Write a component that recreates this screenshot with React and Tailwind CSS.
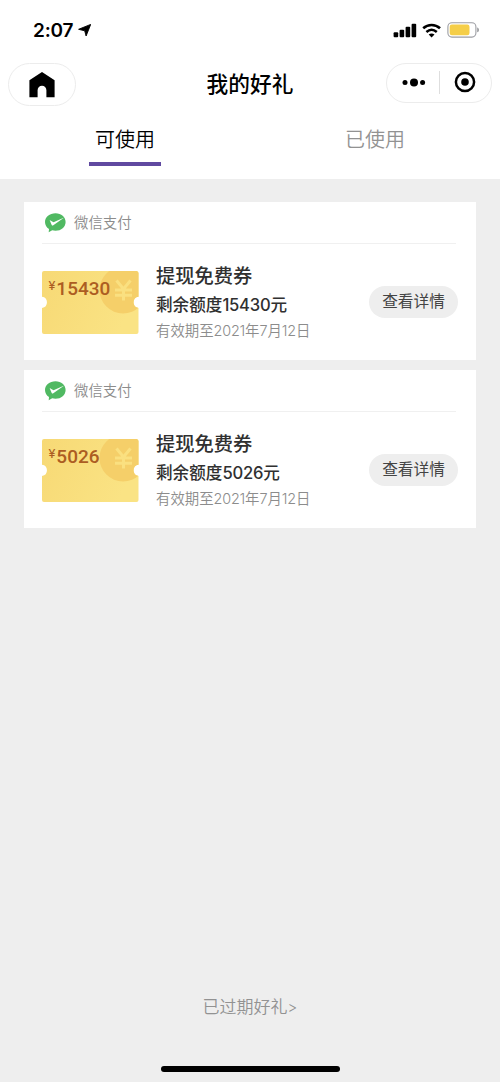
import React from "react";

const coupons = [
  { amount: "15430", name: "提现免费券", quota: "15430" },
  { amount: "5026", name: "提现免费券", quota: "5026" },
];

function StatusBar() {
  return (
    <div className="flex h-[60px] items-center justify-between pl-[33px] pr-[20px]">
      <div className="flex items-center gap-[5px]">
        <span className="font-['Inter',sans-serif] text-[19px] leading-none font-semibold tracking-[-0.2px]">2:07</span>
        <svg width="13" height="13" viewBox="0 0 13 13">
          <path d="M12.7 .4 8.1 12 6.7 6.8 .6 5.3Z" fill="#000" stroke="#000" strokeWidth=".9" strokeLinejoin="round" />
        </svg>
      </div>
      <div className="flex items-center">
        <svg width="24" height="15" viewBox="0 0 24 15">
          <rect x=".6" y="9.2" width="4.6" height="5" rx="1" />
          <rect x="6.6" y="6.7" width="4.6" height="7.5" rx="1" />
          <rect x="12.6" y="3.8" width="4.6" height="10.4" rx="1" />
          <rect x="18.6" y=".8" width="4.6" height="13.4" rx="1" />
        </svg>
        <svg className="ml-[5px]" width="20" height="15" viewBox="0 0 20 15">
          <path d="M1.2 5.2C6 .9 13.2.9 18 5.2" fill="none" stroke="#000" strokeWidth="2.6" />
          <path d="M4.4 9C7.6 6.2 11.6 6.2 14.8 9" fill="none" stroke="#000" strokeWidth="2.5" />
          <path d="M6.7 11.5C8.5 10 10.7 10 12.5 11.5L9.6 14.4Z" />
        </svg>
        <svg className="ml-[5px]" width="33" height="16" viewBox="0 0 33 16">
          <rect x=".9" y=".7" width="28" height="14.4" rx="4" fill="#fff" stroke="#9c9da3" strokeWidth="1.1" />
          <rect x="2.7" y="2.5" width="19.8" height="10.8" rx="2.2" fill="#f5ce48" />
          <path d="M30.3 5.5c2 .6 2 4.2 0 4.8Z" fill="#85868a" />
        </svg>
      </div>
    </div>
  );
}

function NavBar() {
  return (
    <div className="grid h-[52px] grid-cols-[1fr_auto_1fr] items-center pr-[8px] pl-[8px] pb-[4px]">
      <div className="mt-[1px] flex h-[43px] w-[68px] items-center justify-center rounded-full border border-[#ececec]">
        <svg width="26" height="26" viewBox="0 0 26 26">
          <path d="M13 0 25.6 8.3V25.2H17.4V18.2a4.4 4.4 0 0 0-8.8 0V25.2H.4V8.3Z" />
        </svg>
      </div>
      <h1 className="pt-[2px] text-[21.7px] leading-none font-medium">我的好礼</h1>
      <div className="mb-[3px] flex h-[40px] w-[106px] items-center justify-self-end rounded-full border border-[#ececec]">
        <div className="flex w-[52px] justify-center pl-[2px]">
          <svg width="24" height="10" viewBox="0 0 24 10">
            <circle cx="3" cy="4.5" r="2.5" />
            <circle cx="12" cy="4.5" r="4" />
            <circle cx="20.6" cy="4.5" r="2.5" />
          </svg>
        </div>
        <div className="h-[23px] w-px bg-[#dedede]" />
        <div className="flex flex-1 justify-center pr-[2px] pb-[2px]">
          <svg width="22" height="22" viewBox="0 0 22 22">
            <circle cx="11" cy="11" r="9.1" fill="none" stroke="#000" strokeWidth="2.5" />
            <circle cx="11" cy="11" r="3.8" />
          </svg>
        </div>
      </div>
    </div>
  );
}

function Ticket({ amount, id }) {
  return (
    <div className="relative h-[63px] w-[97px]">
      <svg className="block" width="97" height="63" viewBox="0 0 97 63">
        <defs>
          <linearGradient id={id} x1="0" x2="1" y1="0" y2="0.3">
            <stop offset="0" stopColor="#f7d975" />
            <stop offset="1" stopColor="#fae384" />
          </linearGradient>
          <clipPath id={id + "-shape"}>
            <path d="M2 0H94.5a2 2 0 0 1 2 2V25.7a5.7 5.7 0 0 0 0 11.3V61a2 2 0 0 1-2 2H2a2 2 0 0 1-2-2V37a5.7 5.7 0 0 0 0-11.3V2a2 2 0 0 1 2-2Z" />
          </clipPath>
        </defs>
        <g clipPath={`url(#${id}-shape)`}>
          <rect width="97" height="63" fill={`url(#${id})`} />
          <circle cx="81" cy="19" r="23.5" fill="#f5cf69" />
          <path d="M74.5 9.5 81.5 18 88.5 9.5M73 19H90M73 24.2H90M81.5 18V29.5" fill="none" stroke="#fae080" strokeWidth="3" />
        </g>
      </svg>
      <div className="absolute top-[8px] left-[6.5px] flex items-start font-['Roboto',sans-serif] leading-none font-medium text-[#ac5d22]">
        <span className="text-[13px] font-normal">¥</span>
        <span className="ml-px text-[19px]">{amount}</span>
      </div>
    </div>
  );
}

function CouponCard({ coupon, id }) {
  return (
    <section className="h-[158px] bg-white pr-[18px] pl-[18px]">
      <div className="mr-[2px] flex h-[42px] items-center border-b border-[#f0f0f0] pl-[2px]">
        <svg width="22" height="20" viewBox="0 0 22 20">
          <path d="M11.5.2C17.3.2 21.6 4 21.6 9s-4.3 8.8-10.1 8.8c-1.2 0-2.3-.2-3.3-.5L4.7 19.3 5 16C2.5 14.4 1 11.9 1 9 1 4 5.7.2 11.5.2Z" fill="#50b962" />
          <path d="M5.6 7 9.5 9.2 20.3 4.5 9.3 12.3Q8.3 13 7.7 11.9Z" fill="#fff" />
        </svg>
        <span className="ml-[8px] pt-[2px] text-[14.4px] leading-none font-[350] text-[#8c8c8c]">微信支付</span>
      </div>
      <div className="flex h-[116px] items-center">
        <Ticket amount={coupon.amount} id={id} />
        <div className="ml-[17px] flex flex-1 flex-col whitespace-nowrap">
          <div className="text-[19.3px] leading-[30px] font-medium text-[#303030]">{coupon.name}</div>
          <div className="text-[16.6px] leading-[28px] font-medium text-[#303030]">
            剩余额度<span className="tracking-[-0.2px]">{coupon.quota}</span>元
          </div>
          <div className="text-[14.4px] leading-[24px] font-[350] text-[#8c8c8c]">
            有效期至<span className="tracking-[-0.2px]">2021</span>年7月<span className="tracking-[-0.2px]">12</span>日
          </div>
        </div>
        <button className="h-[32px] w-[89px] rounded-full bg-[#eeeeee] text-[15.7px] leading-none text-[#444]">查看详情</button>
      </div>
    </section>
  );
}

export default function App() {
  return (
    <div className="flex h-[1082px] w-[500px] flex-col overflow-hidden bg-[#eeeeee] font-['Inter','Noto_Sans_CJK_SC',sans-serif] text-black">
      <header className="h-[179px] bg-white">
        <StatusBar />
        <NavBar />
        <nav className="grid h-[54px] grid-cols-2 text-center text-[20px] leading-[56px] font-[350]">
          <div className="flex justify-center">
            <div className="h-[54px] w-[72px] border-b-4 border-[#6049a0]">可使用</div>
          </div>
          <div className="text-[#929292]">已使用</div>
        </nav>
      </header>
      <main className="flex flex-1 flex-col gap-[10px] px-[24px] pt-[23px]">
        {coupons.map((c) => (
          <CouponCard key={c.amount} coupon={c} id={"ticket-" + c.amount} />
        ))}
      </main>
      <footer className="flex h-[92px] flex-col items-center justify-between pb-[10px]">
        <a className="pt-px text-[17px] leading-[32px] font-[350] text-[#929292]">已过期好礼<span className="text-[15px]">&gt;</span></a>
        <div className="h-[6px] w-[179px] rounded-full bg-black" />
      </footer>
    </div>
  );
}
